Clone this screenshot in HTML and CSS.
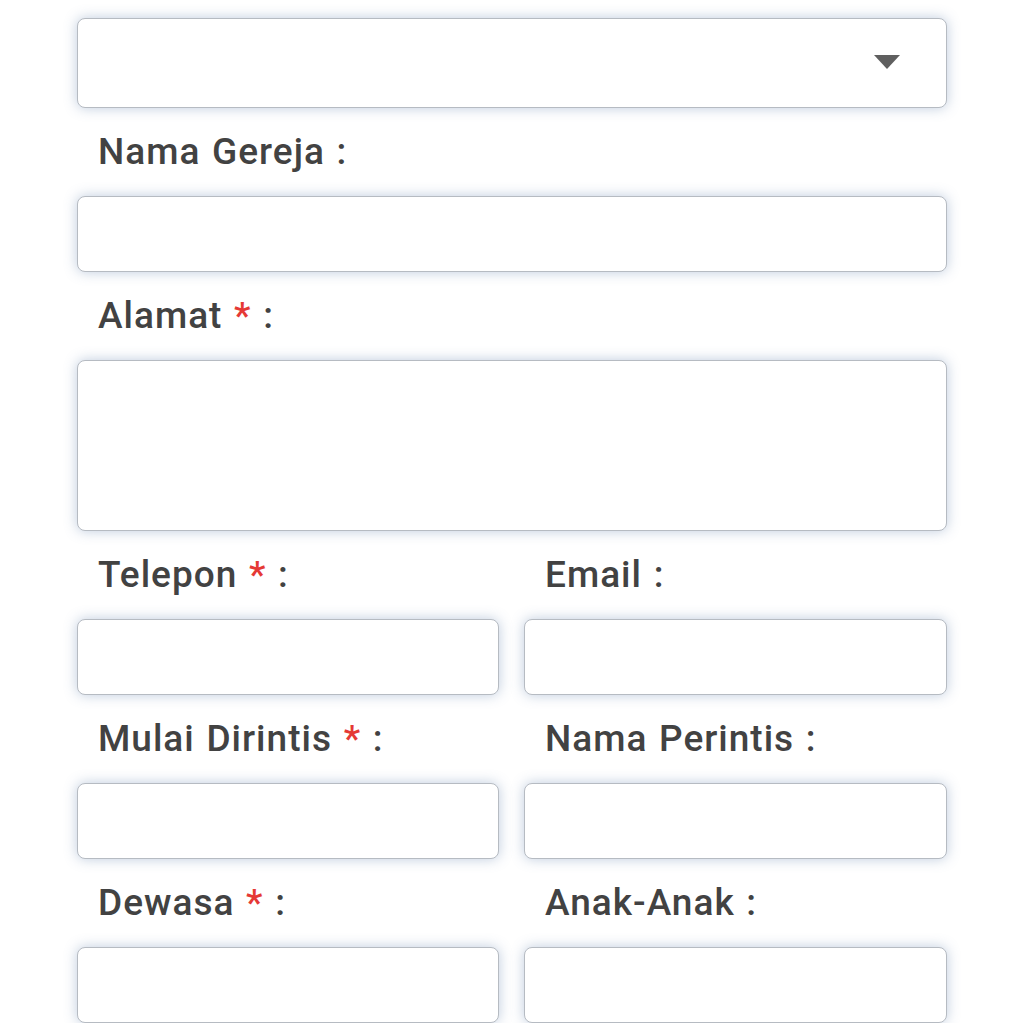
FILE: index.html
```html
<!DOCTYPE html>
<html lang="id">
<head>
    <meta charset="UTF-8">
    <meta name="viewport" content="width=device-width, initial-scale=1.0">
    <title>Data Gereja</title>
    <link rel="stylesheet" href="styles.css">
</head>
<body>
    <form class="form">
        <div class="select">
            <span class="caret"></span>
        </div>

        <label class="label">Nama Gereja :</label>
        <div class="input"></div>

        <label class="label">Alamat <span class="req">*</span> :</label>
        <div class="input textarea"></div>

        <div class="row">
            <div class="field">
                <label class="label">Telepon <span class="req">*</span> :</label>
                <div class="input"></div>
            </div>
            <div class="field">
                <label class="label">Email :</label>
                <div class="input"></div>
            </div>
        </div>

        <div class="row">
            <div class="field">
                <label class="label">Mulai Dirintis <span class="req">*</span> :</label>
                <div class="input"></div>
            </div>
            <div class="field">
                <label class="label">Nama Perintis :</label>
                <div class="input"></div>
            </div>
        </div>

        <div class="row">
            <div class="field">
                <label class="label">Dewasa <span class="req">*</span> :</label>
                <div class="input"></div>
            </div>
            <div class="field">
                <label class="label">Anak-Anak :</label>
                <div class="input"></div>
            </div>
        </div>
    </form>
</body>
</html>
```

FILE: styles.css
```css
* {
    margin: 0;
    padding: 0;
    box-sizing: border-box;
}

body {
    font-family: Roboto, "Liberation Sans", sans-serif;
    background: #fff;
    color: #424242;
}

.form {
    width: 870px;
    margin: 18px 0 0 77px;
    display: flex;
    flex-direction: column;
}

.select,
.input {
    background: #fff;
    border: 1px solid #b6bbc2;
    border-radius: 8px;
    box-shadow: 0 0 13px rgba(110, 140, 180, 0.45);
}

.select {
    height: 90px;
    position: relative;
}

.caret {
    position: absolute;
    right: 46px;
    top: 36px;
    width: 0;
    height: 0;
    border-left: 13px solid transparent;
    border-right: 13px solid transparent;
    border-top: 14px solid #5f5f5f;
}

.label {
    display: block;
    height: 88px;
    line-height: 88px;
    padding-left: 21px;
    font-size: 37px;
    font-weight: 500;
    letter-spacing: 1px;
    word-spacing: 1.5px;
    color: #424242;
}

.req {
    color: #e53935;
}

.input {
    height: 76px;
}

.textarea {
    height: 171px;
}

.row {
    display: grid;
    grid-template-columns: 422px 1fr;
    column-gap: 25px;
}
```
